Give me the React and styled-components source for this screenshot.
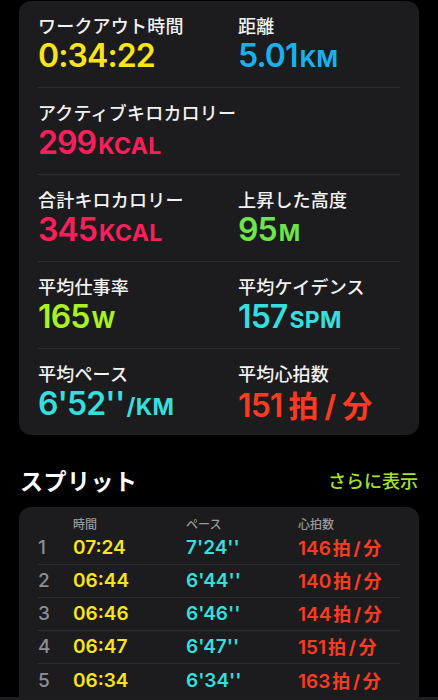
import styled, { createGlobalStyle } from "styled-components";

const GlobalStyle = createGlobalStyle`
  body {
    margin: 0;
    background: #000;
    font-family: Inter, "Noto Sans CJK JP", sans-serif;
    color: #fff;
  }
`;

const COLORS = {
  yellow: "#fbe41a",
  blue: "#14b3ef",
  pink: "#fd1f5b",
  green: "#6fe54c",
  lime: "#a8f31f",
  cyan: "#35dfde",
  red: "#fe3b20",
};

const metrics = [
  [
    { label: "ワークアウト時間", value: "0:34:22", color: COLORS.yellow },
    { label: "距離", value: "5.01", unit: "KM", color: COLORS.blue },
  ],
  [{ label: "アクティブキロカロリー", value: "299", unit: "KCAL", color: COLORS.pink }],
  [
    { label: "合計キロカロリー", value: "345", unit: "KCAL", color: COLORS.pink },
    { label: "上昇した高度", value: "95", unit: "M", color: COLORS.green },
  ],
  [
    { label: "平均仕事率", value: "165", unit: "W", color: COLORS.lime },
    { label: "平均ケイデンス", value: "157", unit: "SPM", color: COLORS.cyan },
  ],
  [
    { label: "平均ペース", value: "6'52''", unit: "/KM", color: COLORS.cyan },
    { label: "平均心拍数", value: "151", bpm: true, color: COLORS.red },
  ],
];

const splits = [
  ["1", "07:24", "7'24''", "146"],
  ["2", "06:44", "6'44''", "140"],
  ["3", "06:46", "6'46''", "144"],
  ["4", "06:47", "6'47''", "151"],
  ["5", "06:34", "6'34''", "163"],
];

function App() {
  return (
    <Page>
      <GlobalStyle />
      <SummaryCard>
        {metrics.map((row, i) => (
          <MetricRow key={i} last={i === metrics.length - 1}>
            {row.map((m) => (
              <Metric key={m.label}>
                <Label>{m.label}</Label>
                <Value color={m.color}>
                  {m.value}
                  {m.unit && <Unit>{m.unit}</Unit>}
                  {m.bpm && (
                    <Bpm>
                      拍<Slash>/</Slash>分
                    </Bpm>
                  )}
                </Value>
              </Metric>
            ))}
          </MetricRow>
        ))}
      </SummaryCard>

      <SectionHeader>
        <Title>スプリット</Title>
        <MoreLink>さらに表示</MoreLink>
      </SectionHeader>

      <SplitCard>
        <SplitHead>
          <span />
          <span>時間</span>
          <span>ペース</span>
          <span>心拍数</span>
        </SplitHead>
        {splits.map(([n, time, pace, hr], i) => (
          <SplitRow key={n} last={i === splits.length - 1}>
            <SplitIndex>{n}</SplitIndex>
            <SplitCell color={COLORS.yellow}>{time}</SplitCell>
            <SplitCell color={COLORS.cyan}>{pace}</SplitCell>
            <SplitCell color={COLORS.red}>
              {hr}
              <SmallBpm>
                拍<SmallSlash>/</SmallSlash>分
              </SmallBpm>
            </SplitCell>
          </SplitRow>
        ))}
      </SplitCard>
      <BottomEdge />
    </Page>
  );
}

const Page = styled.div`
  height: 700px;
  overflow: hidden;
  display: flex;
  flex-direction: column;
`;

const SummaryCard = styled.section`
  margin: 1px 19px 0;
  padding: 0 19px;
  background: #1c1c1e;
  border-radius: 12px;
  flex-shrink: 0;
`;

const MetricRow = styled.div`
  display: grid;
  grid-template-columns: 200px 1fr;
  height: 86px;
  padding-top: 14px;
  box-sizing: border-box;
  border-bottom: ${(p) => (p.last ? "none" : "1px solid #2e2e31")};
  &:not(:last-child) {
    height: 87px;
  }
`;

const Metric = styled.div`
  display: flex;
  flex-direction: column;
`;

const Label = styled.div`
  font-family: "Noto Sans CJK JP", sans-serif;
  font-size: 18px;
  font-weight: 500;
  height: 20px;
  line-height: 20px;
  margin-bottom: 3px;
  letter-spacing: 0.2px;
  color: #f2f2f2;
`;

const Value = styled.div`
  display: flex;
  align-items: baseline;
  height: 36px;
  font-family: Inter, "Noto Sans CJK JP", sans-serif;
  font-size: 32px;
  font-weight: 600;
  line-height: 36px;
  letter-spacing: -0.9px;
  color: ${(p) => p.color};
  white-space: nowrap;
`;

const Unit = styled.span`
  font-size: 23px;
  font-weight: 700;
  letter-spacing: 0.3px;
  margin-left: 2px;
`;

const Bpm = styled.span`
  font-family: "Noto Sans CJK JP", sans-serif;
  font-size: 30px;
  font-weight: 700;
  letter-spacing: 0;
  margin-left: 6px;
`;

const Slash = styled.span`
  font-family: Inter, sans-serif;
  margin: 0 0.2em;
  font-weight: 700;
`;

const SectionHeader = styled.div`
  display: flex;
  align-items: center;
  justify-content: space-between;
  padding: 0 20px;
  margin-top: 31px;
  height: 28px;
  flex-shrink: 0;
`;

const Title = styled.h2`
  margin: 0;
  font-family: "Noto Sans CJK JP", sans-serif;
  font-size: 23px;
  font-weight: 700;
  line-height: 28px;
  letter-spacing: 0.5px;
  color: #fff;
`;

const MoreLink = styled.span`
  font-family: "Noto Sans CJK JP", sans-serif;
  font-size: 18px;
  font-weight: 500;
  line-height: 20px;
  color: #a7e22b;
`;

const SplitCard = styled.section`
  margin: 13px 19px 0;
  padding: 9px 19px 2px;
  background: #1c1c1e;
  border-radius: 12px 12px 0 0;
  flex: 1;
  min-height: 0;
`;

const SplitHead = styled.div`
  display: grid;
  grid-template-columns: 35px 113px 112px 1fr;
  height: 16px;
  font-family: "Noto Sans CJK JP", sans-serif;
  font-size: 12px;
  font-weight: 500;
  line-height: 16px;
  color: #98989d;
`;

const SplitRow = styled.div`
  display: grid;
  grid-template-columns: 35px 113px 112px 1fr;
  align-items: center;
  height: 33px;
  box-sizing: border-box;
  border-bottom: ${(p) => (p.last ? "none" : "1px solid #2e2e31")};
`;

const SplitIndex = styled.span`
  font-family: Inter, sans-serif;
  font-size: 19px;
  font-weight: 500;
  line-height: 24px;
  color: #8e8e93;
`;

const SplitCell = styled.span`
  display: flex;
  align-items: baseline;
  font-family: Inter, "Noto Sans CJK JP", sans-serif;
  font-size: 19px;
  font-weight: 600;
  line-height: 24px;
  color: ${(p) => p.color};
  white-space: nowrap;
`;

const SmallBpm = styled.span`
  font-family: "Noto Sans CJK JP", sans-serif;
  font-size: 18px;
  font-weight: 700;
  margin-left: 2px;
`;

const SmallSlash = styled.span`
  font-family: Inter, sans-serif;
  font-weight: 700;
  margin: 0 0.15em;
`;

const BottomEdge = styled.div`
  height: 3px;
  background: #1d1d1f;
  flex-shrink: 0;
`;

export default App;
